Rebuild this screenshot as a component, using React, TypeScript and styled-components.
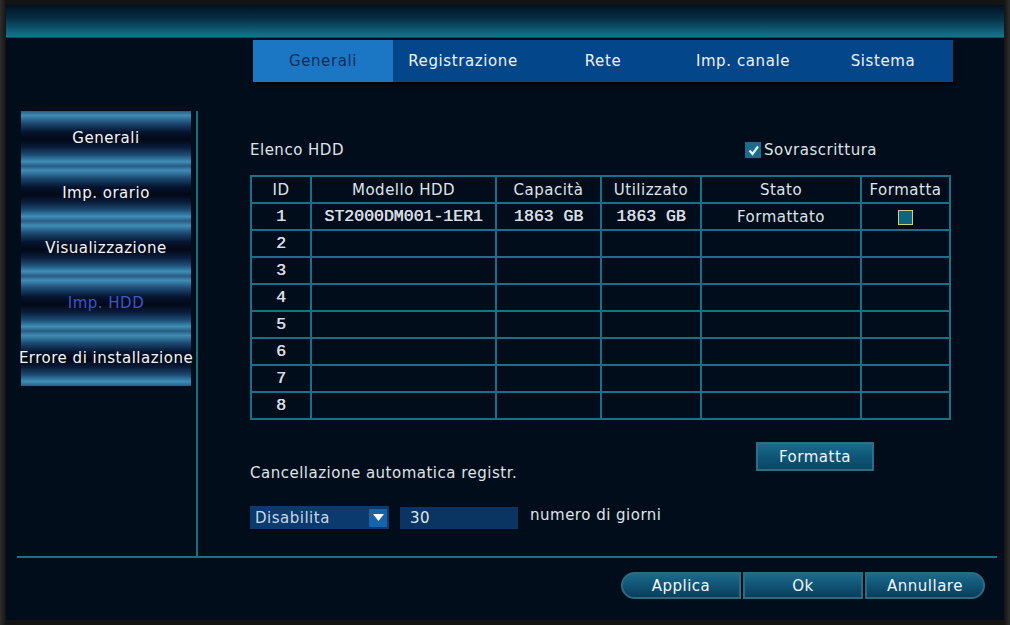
import styled, { createGlobalStyle } from "styled-components";

const GlobalStyle = createGlobalStyle`
  html, body {
    margin: 0;
    padding: 0;
    background: #1e1e1e;
  }
  * {
    box-sizing: border-box;
  }
`;

const sans = `"DejaVu Sans", Verdana, sans-serif`;
const mono = `"Liberation Mono", "Courier New", monospace`;

const tabs = ["Generali", "Registrazione", "Rete", "Imp. canale", "Sistema"];
const menu = [
  "Generali",
  "Imp. orario",
  "Visualizzazione",
  "Imp. HDD",
  "Errore di installazione",
];

const columns = [
  { title: "ID", width: 60 },
  { title: "Modello HDD", width: 185 },
  { title: "Capacità", width: 105 },
  { title: "Utilizzato", width: 100 },
  { title: "Stato", width: 160 },
  { title: "Formatta", width: 89 },
];

const disks = [
  { id: 1, model: "ST2000DM001-1ER1", size: "1863 GB", used: "1863 GB", state: "Formattato", present: true },
  ...[2, 3, 4, 5, 6, 7, 8].map((id) => ({
    id,
    model: "",
    size: "",
    used: "",
    state: "",
    present: false,
  })),
];

const App = () => {
  return (
    <Screen>
      <GlobalStyle />
      <Window>
        <TitleBar />
        <TabRow>
          <TabBar>
            {tabs.map((tab, i) => (
              <Tab key={tab} $active={i === 0}>
                {tab}
              </Tab>
            ))}
          </TabBar>
        </TabRow>
        <Main>
          <Sidebar>
            <Menu>
              {menu.map((item) => (
                <MenuItem key={item} $active={item === "Imp. HDD"}>
                  {item}
                </MenuItem>
              ))}
            </Menu>
          </Sidebar>
          <Content>
            <ListHeader>
              <Label>Elenco HDD</Label>
              <CheckLabel>
                <CheckBox>
                  <svg width="13" height="13" viewBox="0 0 13 13">
                    <polyline
                      points="2.5,6.5 5.5,10 11,2.5"
                      fill="none"
                      stroke="#e6f4fa"
                      strokeWidth="2.2"
                    />
                  </svg>
                </CheckBox>
                Sovrascrittura
              </CheckLabel>
            </ListHeader>
            <Table>
              <thead>
                <tr>
                  {columns.map((c) => (
                    <HeadCell key={c.title} style={{ width: c.width }}>
                      {c.title}
                    </HeadCell>
                  ))}
                </tr>
              </thead>
              <tbody>
                {disks.map((d) => (
                  <tr key={d.id}>
                    <MonoCell>{d.id}</MonoCell>
                    <MonoCell>{d.model}</MonoCell>
                    <MonoCell>{d.size}</MonoCell>
                    <MonoCell>{d.used}</MonoCell>
                    <TextCell>{d.state}</TextCell>
                    <TextCell>{d.present && <FormatBox />}</TextCell>
                  </tr>
                ))}
              </tbody>
            </Table>
            <FormatRow>
              <Label>Cancellazione automatica registr.</Label>
              <FormatButton>Formatta</FormatButton>
            </FormatRow>
            <ControlRow>
              <Select>
                <span>Disabilita</span>
                <SelectArrow>
                  <svg width="11" height="7" viewBox="0 0 11 7">
                    <polygon points="0,0 11,0 5.5,7" fill="#ffffff" />
                  </svg>
                </SelectArrow>
              </Select>
              <Input>30</Input>
              <Label>numero di giorni</Label>
            </ControlRow>
          </Content>
        </Main>
        <Footer>
          <FooterButton $shape="left">Applica</FooterButton>
          <FooterButton $shape="middle">Ok</FooterButton>
          <FooterButton $shape="right">Annullare</FooterButton>
        </Footer>
      </Window>
    </Screen>
  );
};

export default App;

const Screen = styled.div`
  width: 1010px;
  height: 625px;
  padding: 5px 6px 5px 6px;
  background: linear-gradient(to right, #2e2e2e 0, #141414 6px, #141414 1004px, #2e2e2e 1010px);
`;

const Window = styled.div`
  width: 998px;
  height: 615px;
  background: #020d1b;
  display: flex;
  flex-direction: column;
  font-family: ${sans};
  letter-spacing: 0.5px;
  color: #dfe3e8;
`;

const TitleBar = styled.div`
  height: 33px;
  flex-shrink: 0;
  background: linear-gradient(to bottom, #02101f 0%, #07324a 45%, #13768e 100%);
  border-bottom: 1px solid #24465a;
`;

const TabRow = styled.div`
  padding: 2px 0 0 247px;
`;

const TabBar = styled.div`
  display: flex;
  width: 700px;
  height: 42px;
  background: #04468a;
  box-shadow: 2px 3px 4px rgba(0, 0, 0, 0.6);
`;

const Tab = styled.div<{ $active: boolean }>`
  width: 140px;
  display: flex;
  align-items: center;
  justify-content: center;
  font-size: 15px;
  letter-spacing: 0.6px;
  background: ${(p) => (p.$active ? "#1b77c4" : "transparent")};
  color: ${(p) => (p.$active ? "#0c2b5c" : "#eef2f6")};
`;

const Main = styled.div`
  display: flex;
  height: 476px;
  margin: 0 7px 0 11px;
  border-bottom: 2px solid #17717f;
`;

const Sidebar = styled.div`
  width: 181px;
  margin-top: 29px;
  padding-left: 4px;
  border-right: 2px solid #17717f;
  flex-shrink: 0;
`;

const Menu = styled.div`
  display: flex;
  flex-direction: column;
  width: 170px;
`;

const MenuItem = styled.div<{ $active: boolean }>`
  height: 55px;
  display: flex;
  align-items: center;
  justify-content: center;
  white-space: nowrap;
  padding-bottom: 2px;
  font-size: 15px;
  letter-spacing: 0.5px;
  color: ${(p) => (p.$active ? "#3d57c9" : "#f2f5f8")};
  background: linear-gradient(
    to bottom,
    #2a5a82 0%,
    #3f8db4 8%,
    #1d4a72 22%,
    #061430 38%,
    #020816 52%,
    #0a1c3a 66%,
    #1d4c74 80%,
    #3e90b6 92%,
    #2a5a82 100%
  );
`;

const Content = styled.div`
  flex: 1;
  padding: 57px 0 0 52px;
`;

const Label = styled.span`
  font-size: 15px;
  color: #dfe3e8;
  white-space: nowrap;
`;

const ListHeader = styled.div`
  display: flex;
  align-items: center;
  width: 699px;
  height: 22px;
  padding-right: 72px;
`;

const CheckLabel = styled.label`
  margin-left: auto;
  display: flex;
  align-items: center;
  gap: 3px;
  font-size: 15px;
  color: #dfe3e8;
`;

const CheckBox = styled.span`
  width: 16px;
  height: 16px;
  background: #1b6c8a;
  display: flex;
  align-items: center;
  justify-content: center;
`;

const Table = styled.table`
  margin-top: 14px;
  width: 699px;
  border-collapse: collapse;
  table-layout: fixed;
  border: 2px solid #1a7088;
`;

const HeadCell = styled.th`
  height: 27px;
  padding: 0;
  font-weight: normal;
  font-size: 15px;
  color: #dfe3e8;
  border: 2px solid #1a7088;
  text-align: center;
`;

const MonoCell = styled.td`
  height: 27px;
  padding: 0;
  font-family: ${mono};
  font-size: 16.5px;
  letter-spacing: 0;
  color: #d8dde3;
  text-shadow: 0.5px 0 0 #d8dde3;
  text-align: center;
  border: 2px solid #1a7088;
  white-space: nowrap;
`;

const TextCell = styled.td`
  height: 27px;
  padding: 0;
  font-size: 15px;
  color: #dfe3e8;
  text-align: center;
  border: 2px solid #1a7088;
`;

const FormatBox = styled.span`
  display: inline-block;
  vertical-align: middle;
  width: 15px;
  height: 15px;
  background: #0f6580;
  border: 1px solid #c7d27a;
`;

const FormatRow = styled.div`
  display: flex;
  width: 699px;
  height: 42px;
  margin-top: 22px;
  padding-right: 75px;

  ${Label} {
    align-self: flex-end;
    margin-bottom: 2px;
  }
`;

const FormatButton = styled.button`
  margin-left: auto;
  width: 118px;
  height: 29px;
  font-family: ${sans};
  font-size: 15px;
  letter-spacing: 0.5px;
  color: #f0f4f8;
  border: 2px solid #2c6e86;
  background: linear-gradient(to bottom, #1a6b8c 0%, #0f5677 50%, #0a4664 100%);
`;

const ControlRow = styled.div`
  display: flex;
  align-items: center;
  margin-top: 22px;

  ${Label} {
    margin-left: 12px;
    margin-top: -6px;
  }
`;

const Select = styled.div`
  width: 139px;
  height: 23px;
  display: flex;
  align-items: center;
  justify-content: space-between;
  padding: 0 2px 0 5px;
  background: #0a3a6e;
  font-size: 15px;
  color: #c9d6e4;
  box-shadow: 0 1px 2px rgba(0, 0, 0, 0.8);
`;

const SelectArrow = styled.span`
  width: 18px;
  height: 18px;
  background: #1563ad;
  display: flex;
  align-items: center;
  justify-content: center;
`;

const Input = styled.div`
  margin-left: 11px;
  width: 118px;
  height: 22px;
  padding-left: 10px;
  display: flex;
  align-items: center;
  background: #0a3563;
  font-size: 15px;
  color: #dfe6ee;
`;

const Footer = styled.div`
  display: flex;
  justify-content: flex-end;
  gap: 2px;
  padding: 14px 19px 0 0;
`;

const FooterButton = styled.button<{ $shape: "left" | "middle" | "right" }>`
  width: 120px;
  height: 27px;
  font-family: ${sans};
  font-size: 15px;
  letter-spacing: 0.5px;
  color: #f2f6fa;
  border: 2px solid #2d6b80;
  border-radius: ${(p) =>
    p.$shape === "left"
      ? "14px 0 0 14px"
      : p.$shape === "right"
        ? "0 14px 14px 0"
        : "0"};
  background: linear-gradient(to bottom, #1c6a88 0%, #12587a 40%, #0a3e5c 100%);
`;
